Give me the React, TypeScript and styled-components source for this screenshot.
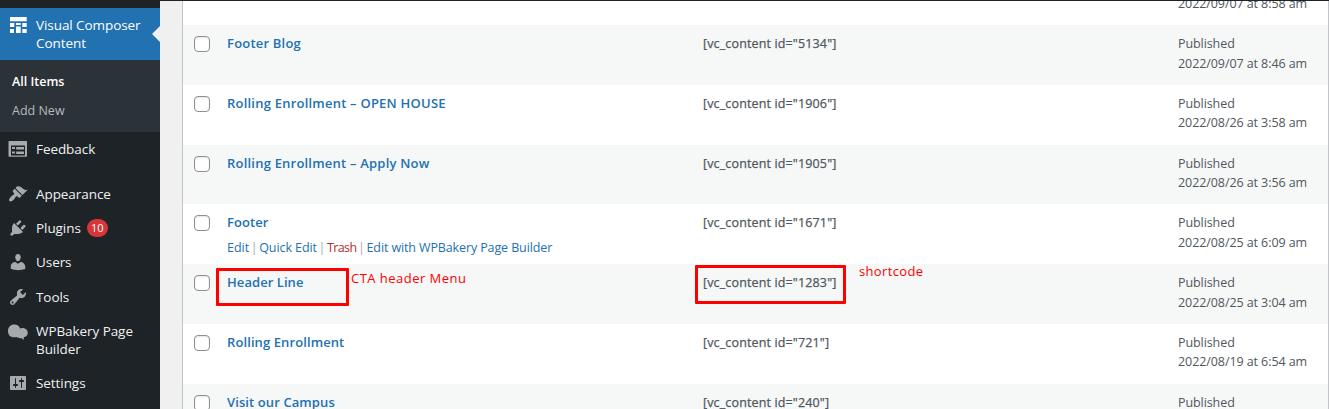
import React from 'react';
import styled, { createGlobalStyle } from 'styled-components';

const Global = createGlobalStyle`
  * { box-sizing: border-box; }
  body { margin: 0; background: #f0f0f1; font-family: "Open Sans", "Noto Sans", sans-serif; }
`;

const Screen = styled.div`
  position: relative;
  display: flex;
  width: 1329px;
  height: 409px;
  overflow: hidden;
  background: #f0f0f1;
`;

const Sidebar = styled.nav`
  display: flex;
  flex-direction: column;
  width: 160px;
  padding-top: 8px;
  background: #1d2327;
`;

const MenuItem = styled.a<{ $active?: boolean; $gap?: number }>`
  position: relative;
  display: flex;
  flex: none;
  min-height: 34.2px;
  margin-top: ${(p) => p.$gap ?? 0}px;
  padding: 8px 0 7.8px 8px;
  gap: 8px;
  color: ${(p) => (p.$active ? '#fff' : '#f0f0f1')};
  background: ${(p) => (p.$active ? '#2271b1' : 'transparent')};
  font-size: 13.5px;
  line-height: 18.1px;
  &::after {
    content: '';
    display: ${(p) => (p.$active ? 'block' : 'none')};
    position: absolute;
    right: 0;
    top: 18px;
    border: 8px solid transparent;
    border-right-color: #f0f0f1;
  }
`;

const MenuIcon = styled.svg<{ $active?: boolean }>`
  flex: none;
  width: 20px;
  height: 20px;
  margin: -1px 0 -2px;
  fill: ${(p) => (p.$active ? '#fff' : '#a7aaad')};
`;

const Label = styled.span`
  white-space: pre;
  letter-spacing: -0.07px;
`;

const Count = styled.span`
  min-width: 21px;
  height: 18px;
  margin-left: -2px;
  border-radius: 9px;
  background: #d63638;
  color: #fff;
  font-size: 11px;
  line-height: 18px;
  text-align: center;
`;

const SubMenu = styled.div`
  display: flex;
  flex: none;
  flex-direction: column;
  height: 72px;
  padding: 7px 12px;
  background: #2c3338;
`;

const SubItem = styled.a<{ $current?: boolean }>`
  height: 29px;
  color: ${(p) => (p.$current ? '#fff' : '#b4b9be')};
  font-size: 12.5px;
  font-weight: ${(p) => (p.$current ? 600 : 400)};
  line-height: 29px;
`;

const Content = styled.main`
  flex: 1;
  padding-left: 22px;
  border-top: 1px solid #1d2327;
`;

const Table = styled.div`
  height: 408px;
  overflow: hidden;
  border: solid #c3c4c7;
  border-width: 0 1px;
  background: #fff;
`;

const Row = styled.div<{ $striped?: boolean; $first?: boolean }>`
  display: grid;
  grid-template-columns: 44px 476px 475px 1fr;
  height: 59.8px;
  margin-top: ${(p) => (p.$first ? '-35.8px' : 0)};
  padding-top: 9px;
  background: ${(p) => (p.$striped ? '#f6f7f7' : '#fff')};
  color: #50575e;
  font-size: 12.5px;
  line-height: 19.5px;
`;

const Check = styled.span`
  width: 16px;
  height: 16px;
  margin: 2px 0 0 11px;
  border: 1px solid #8c8f94;
  border-radius: 4px;
  background: #fff;
  box-shadow: inset 0 1px 2px rgba(0, 0, 0, 0.1);
`;

const Title = styled.div<{ $track?: number }>`
  color: #2271b1;
  font-size: 13px;
  font-weight: 600;
  letter-spacing: ${(p) => p.$track ?? 0}px;
`;

const Code = styled.div`
  font-size: 12.5px;
  letter-spacing: 0.14px;
  -webkit-text-stroke: 0.25px #50575e;
`;

const Actions = styled.div`
  display: flex;
  margin-top: 5px;
`;

const Action = styled.a<{ $danger?: boolean; $track?: number }>`
  color: ${(p) => (p.$danger ? '#b32d2e' : '#2271b1')};
  letter-spacing: ${(p) => p.$track ?? 0}px;
`;

const Divider = styled.span`
  width: 10px;
  color: #a7aaad;
  text-align: center;
`;

const Cell = styled.div``;

const DateCell = styled.div`
  letter-spacing: -0.08px;
`;

const Outline = styled.div<{ $x: number; $y: number; $w: number; $h: number }>`
  position: absolute;
  left: ${(p) => p.$x}px;
  top: ${(p) => p.$y}px;
  width: ${(p) => p.$w}px;
  height: ${(p) => p.$h}px;
  border: 3px solid #fe0000;
  border-radius: 1px;
`;

const Note = styled.div<{ $x: number; $y: number; $track: number }>`
  position: absolute;
  left: ${(p) => p.$x}px;
  top: ${(p) => p.$y}px;
  color: #fe0000;
  font-size: 13px;
  line-height: 18px;
  letter-spacing: ${(p) => p.$track}px;
`;

const icons = {
  composer: (
    <path d="M2 2h16.700v4.300H2zM2 8h4.300v4H2zM8 8h4.700v2H8zM14.300 8h4.400v4h-4.400zM2 14h4v4H2zM8 11.400h4.700V18H8zM14.300 14h4.400v4h-4.400z" />
  ),
  feedback: (
    <path
      fillRule="evenodd"
      d="M1 2h17.500c.3 0 .5.2.5.5v14.700c0 .3-.2.500-.5.500H1c-.3 0-.5-.2-.5-.5V2.500c0-.3.2-.5.5-.5zM3 6.500v10h14v-10zM4 8h3v2H4zm4.200 0H16v2.500H8.200zM4 12.500h3v2H4zm4.200 0H16V15H8.200z"
    />
  ),
  appearance: (
    <path d="M14.48 11.06L7.41 3.99l1.5-1.5c.5-.56 2.3-.47 3.51.32 1.21.8 1.43 1.28 2.91 2.1 1.18.64 2.45 1.26 4.45.85zm-.71.71L6.7 4.7 4.93 6.47c-.39.39-.39 1.02 0 1.41l1.06 1.06c.39.39.39 1.03 0 1.42-.6.6-1.43 1.11-2.21 1.69-.35.26-.7.53-1.01.84C1.43 14.23.4 16.08 1.4 17.07c.99 1 2.84-.03 4.18-1.36.31-.31.58-.66.85-1.02.57-.78 1.08-1.61 1.69-2.21.39-.39 1.02-.39 1.41 0l1.06 1.06c.39.39 1.02.39 1.41 0z" />
  ),
  plugins: (
    <path d="M13.11 4.36L9.87 7.6 8 5.73l3.24-3.24c.35-.34 1.05-.2 1.56.32.52.51.66 1.21.31 1.55zm-8 1.77l.91-1.12 9.01 9.01-1.19.84c-.71.71-2.63 1.16-3.82 1.16H6.14L4.9 17.26c-.59.59-1.54.59-2.12 0-.59-.58-.59-1.53 0-2.12l1.24-1.24v-3.88c0-1.13.4-3.19 1.09-3.89zm7.26 3.97l3.24-3.24c.34-.35 1.04-.21 1.55.31.52.51.66 1.21.31 1.55l-3.24 3.25z" />
  ),
  users: (
    <path d="M10 9.25c-2.27 0-2.73-3.44-2.73-3.44C7 4.02 7.82 2 9.97 2c2.16 0 2.98 2.02 2.71 3.81 0 0-.41 3.44-2.68 3.44zm0 2.57L12.72 10c2.39 0 4.52 2.33 4.52 4.53v2.49s-3.65 1.13-7.24 1.13c-3.65 0-7.24-1.13-7.24-1.13v-2.49c0-2.25 1.94-4.48 4.47-4.48z" />
  ),
  tools: (
    <path d="M16.68 9.77c-1.34 1.34-3.3 1.67-4.95.99l-5.41 6.52c-.99.99-2.59.99-3.58 0s-.99-2.59 0-3.57l6.52-5.42c-.68-1.65-.35-3.61.99-4.95 1.28-1.28 3.12-1.62 4.72-1.06l-2.89 2.89 2.82 2.82 2.86-2.87c.53 1.58.18 3.39-1.08 4.65zM3.81 16.21c.4.39 1.04.39 1.43 0 .4-.4.4-1.04 0-1.43-.39-.4-1.03-.4-1.43 0-.39.39-.39 1.03 0 1.43z" />
  ),
  bakery: (
    <path d="M6.200 3.500c3 0 5 1.600 5.900 4 .9-.500 1.900-.700 3-.500 2.700.200 4.700 2.100 4.700 4.800 0 2.400-1.600 4.100-4.100 4.500l.200 2.200c-1.100-.200-2-.800-2.500-1.600-1.600.500-3.400.300-4.500-.900C4.800 17.200 0 15.600 0 9.900 0 6.200 2.700 3.500 6.200 3.500z" />
  ),
  settings: (
    <path d="M18 16V4c0-.55-.45-1-1-1H3c-.55 0-1 .45-1 1v12c0 .55.45 1 1 1h14c.55 0 1-.45 1-1zM8 11h1c.55 0 1 .45 1 1s-.45 1-1 1H8v1.5c0 .28-.22.5-.5.5s-.5-.22-.5-.5V13H6c-.55 0-1-.45-1-1s.45-1 1-1h1V5.5c0-.28.22-.5.5-.5s.5.22.5.5V11zm5-2h-1c-.55 0-1-.45-1-1s.45-1 1-1h1V5.5c0-.28.22-.5.5-.5s.5.22.5.5V7h1c.55 0 1 .45 1 1s-.45 1-1 1h-1v5.5c0 .28-.22.5-.5.5s-.5-.22-.5-.5V9z" />
  ),
};

type Entry = {
  icon: keyof typeof icons;
  text: string;
  gap?: number;
  count?: number;
};

const entries: Entry[] = [
  { icon: 'feedback', text: 'Feedback' },
  { icon: 'appearance', text: 'Appearance', gap: 10.8 },
  { icon: 'plugins', text: 'Plugins', count: 10 },
  { icon: 'users', text: 'Users' },
  { icon: 'tools', text: 'Tools' },
  { icon: 'bakery', text: 'WPBakery Page\nBuilder' },
  { icon: 'settings', text: 'Settings' },
];

type Post = { title: string; id: string; date: string; hover?: boolean; track?: number };

const posts: Post[] = [
  { title: '', id: '', date: '2022/09/07 at 8:58 am' },
  { title: 'Footer Blog', id: '5134', date: '2022/09/07 at 8:46 am', track: 0.2 },
  { title: 'Rolling Enrollment – OPEN HOUSE', id: '1906', date: '2022/08/26 at 3:58 am', track: 0.22 },
  { title: 'Rolling Enrollment – Apply Now', id: '1905', date: '2022/08/26 at 3:56 am', track: 0.21 },
  { title: 'Footer', id: '1671', date: '2022/08/25 at 6:09 am', hover: true, track: 0.08 },
  { title: 'Header Line', id: '1283', date: '2022/08/25 at 3:04 am', track: 0.06 },
  { title: 'Rolling Enrollment', id: '721', date: '2022/08/19 at 6:54 am', track: 0.1 },
  { title: 'Visit our Campus', id: '240', date: '', track: 0.1 },
];

export default function App() {
  return (
    <Screen>
      <Global />
      <Sidebar>
        <MenuItem $active>
          <MenuIcon $active viewBox="0 0 20 20">{icons.composer}</MenuIcon>
          <Label>{'Visual Composer\nContent'}</Label>
        </MenuItem>
        <SubMenu>
          <SubItem $current>All Items</SubItem>
          <SubItem>Add New</SubItem>
        </SubMenu>
        {entries.map((e) => (
          <MenuItem key={e.text} $gap={e.gap}>
            <MenuIcon viewBox="0 0 20 20">{icons[e.icon]}</MenuIcon>
            <Label>{e.text}</Label>
            {e.count && <Count>{e.count}</Count>}
          </MenuItem>
        ))}
      </Sidebar>
      <Content>
        <Table>
          {posts.map((p, i) => (
            <Row key={i} $first={i === 0} $striped={i % 2 === 1}>
              {p.title ? <Check /> : <Cell />}
              <Cell>
                <Title $track={p.track}>{p.title}</Title>
                {p.hover && (
                  <Actions>
                    <Action>Edit</Action>
                    <Divider>|</Divider>
                    <Action $track={-0.08}>Quick Edit</Action>
                    <Divider>|</Divider>
                    <Action $danger $track={-0.6}>Trash</Action>
                    <Divider>|</Divider>
                    <Action $track={-0.12}>Edit with WPBakery Page Builder</Action>
                  </Actions>
                )}
              </Cell>
              <Code>{p.id && `[vc_content id="${p.id}"]`}</Code>
              <DateCell>
                Published
                <br />
                {p.date}
              </DateCell>
            </Row>
          ))}
        </Table>
      </Content>
      <Outline $x={216} $y={268} $w={133} $h={38} />
      <Outline $x={695} $y={265} $w={151} $h={39} />
      <Note $x={351} $y={269} $track={0.47}>CTA header Menu</Note>
      <Note $x={859} $y={262} $track={0.35}>shortcode</Note>
    </Screen>
  );
}
